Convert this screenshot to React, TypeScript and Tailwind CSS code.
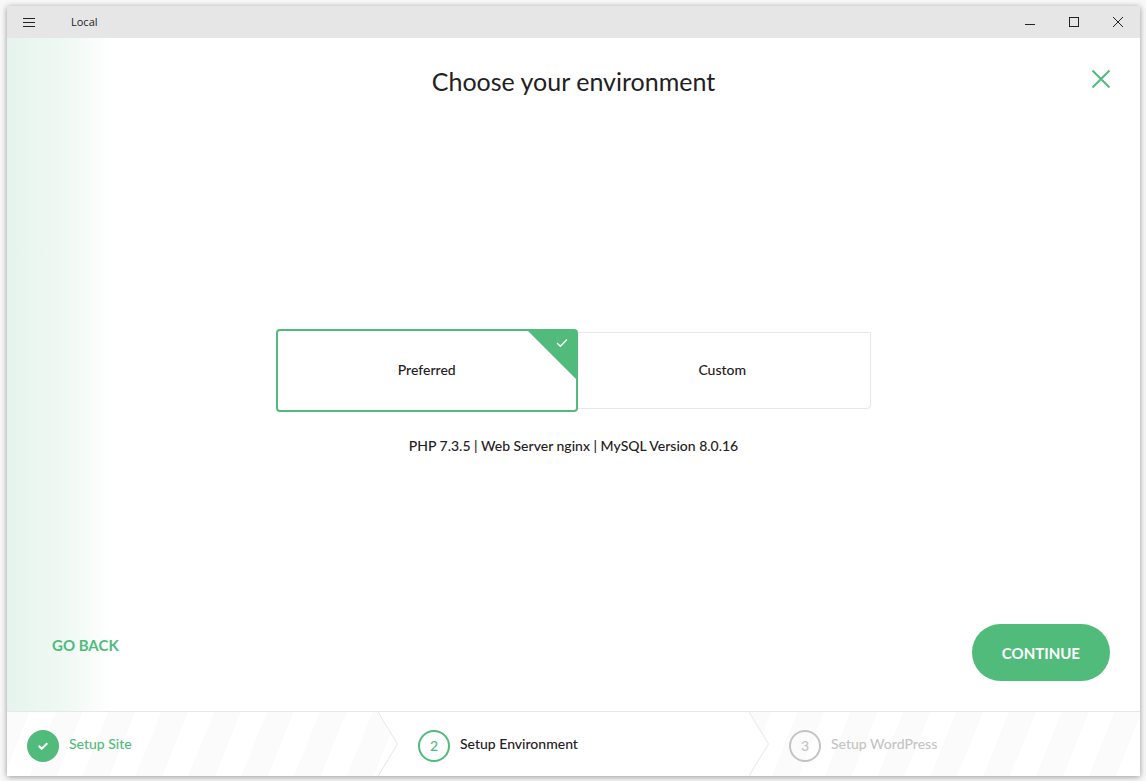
import React, { useState } from "react";
import clsx from "clsx";

const stripes =
  "bg-[repeating-linear-gradient(112deg,#fbfbfb_0px,#fbfbfb_21px,#fff_21px,#fff_45px,#fbfbfb_45px,#fbfbfb_49px)]";

const TitleBar: React.FC = () => (
  <header className="flex h-8 items-stretch bg-[#e6e6e6] text-[#222]">
    <button type="button" aria-label="Menu" className="flex w-11 items-center justify-center">
      <svg width="12" height="9" viewBox="0 0 12 9" fill="currentColor" shapeRendering="crispEdges">
        <path d="M0 0h12v1H0zM0 4h12v1H0zM0 8h12v1H0z" />
      </svg>
    </button>
    <span className="flex-1 self-center pl-5 font-['Open_Sans',sans-serif] text-[11px] leading-4">Local</span>
    <button type="button" aria-label="Minimize" className="flex w-11 items-center justify-center">
      <svg width="10" height="10" viewBox="0 0 10 10" fill="currentColor" shapeRendering="crispEdges">
        <path d="M0 7h10v1H0z" />
      </svg>
    </button>
    <button type="button" aria-label="Maximize" className="flex w-11 items-center justify-center">
      <svg width="10" height="10" viewBox="0 0 10 10" fill="none" stroke="currentColor">
        <rect x="0.5" y="0.5" width="9" height="9" />
      </svg>
    </button>
    <button type="button" aria-label="Close window" className="flex w-11 items-center justify-center">
      <svg width="10" height="10" viewBox="0 0 10 10" fill="none" stroke="currentColor">
        <path d="M0 0l10 10M10 0L0 10" />
      </svg>
    </button>
  </header>
);

type OptionProps = {
  label: string;
  checked: boolean;
  onSelect: () => void;
  className?: string;
};

const Option: React.FC<OptionProps> = ({ label, checked, onSelect, className }) => (
  <label
    className={clsx(
      "relative flex cursor-pointer items-center justify-center bg-white text-sm leading-5",
      checked ? "z-10 h-[83px] rounded border-2 border-[#51bb7b]" : "h-[77px] rounded-b border border-[#e7e7e7]",
      className
    )}
  >
    <input type="radio" name="environment" checked={checked} onChange={onSelect} className="sr-only" />
    {label}
    {checked && (
      <svg className="absolute -top-px -right-px" width="50" height="50" viewBox="0 0 50 50" fill="none">
        <path d="M0 0h48a2 2 0 0 1 2 2v48z" fill="#51bb7b" />
        <path d="M30 13l3.300 3.300L40 9.500" stroke="#fff" strokeWidth="1.4" />
      </svg>
    )}
  </label>
);

type StepProps = {
  number: number;
  label: string;
  state: "done" | "active" | "todo";
};

const Step: React.FC<StepProps> = ({ number, label, state }) => {
  const last = state === "todo";
  return (
    <li
      className={clsx(
        "relative flex items-start gap-2.5 pt-[18px]",
        state === "done" && "z-20 pl-5 text-[#51bb7b]",
        state === "active" && "z-10 pl-10",
        last && "pl-10 text-[#c4c4c4]"
      )}
    >
      <div
        className={clsx(
          "absolute inset-y-0 -right-5 left-0 -z-10",
          !last && "[clip-path:polygon(0_0,calc(100%_-_20px)_0,100%_50%,calc(100%_-_20px)_100%,0_100%)]",
          state === "active" ? "bg-white" : stripes
        )}
      />
      {!last && (
        <svg className="absolute inset-y-0 left-full h-full w-5" viewBox="0 0 20 64" preserveAspectRatio="none" fill="none">
          <path d="M0 0l19.500 32L0 64" stroke="#e7e7e7" />
        </svg>
      )}
      <span
        className={clsx(
          "flex size-8 shrink-0 items-center justify-center rounded-full text-sm",
          state === "done" && "bg-[#51bb7b] text-white",
          state === "active" && "border-2 border-[#51bb7b] text-[#51bb7b]",
          last && "border-2 border-[#c4c4c4]"
        )}
      >
        {state === "done" ? (
          <svg width="10" height="8" viewBox="0 0 10 8" fill="none" stroke="currentColor" strokeWidth="2">
            <path d="M0.700 3.800l3 3L9.300 1.200" />
          </svg>
        ) : (
          number
        )}
      </span>
      <span className="text-sm leading-7">{label}</span>
    </li>
  );
};

export default function App() {
  const [environment, setEnvironment] = useState("preferred");

  return (
    <div className="flex min-h-screen bg-[#f8f8f8] pt-1.5 pr-1.5 pb-[5px] pl-[7px] font-[Lato,sans-serif] font-medium text-[#1f2123]">
      <div className="flex flex-1 flex-col bg-white shadow-[0_1px_6px_rgba(0,0,0,0.4)]">
        <TitleBar />
        <main className="flex flex-1 flex-col bg-[linear-gradient(90deg,#e5f4ec,#f0f9f4_60px,#fff_105px)]">
          <div className="grid grid-cols-[1fr_auto_1fr] items-start px-[30px] pt-7 pb-16">
            <h1 className="col-start-2 text-[25px] leading-[30px] font-normal">Choose your environment</h1>
            <button type="button" aria-label="Close" className="mt-1 justify-self-end text-[#51bb7b]">
              <svg className="block" width="18" height="18" viewBox="0 0 18 18" fill="none" stroke="currentColor" strokeWidth="2">
                <path d="M0.500 0.500l17 17M17.500 0.500l-17 17" />
              </svg>
            </button>
          </div>

          <div className="flex flex-1 flex-col items-center justify-center">
            <div role="radiogroup" aria-label="Environment" className="grid w-full max-w-[595px] grid-cols-2 items-center">
              <Option
                label="Preferred"
                checked={environment === "preferred"}
                onSelect={() => setEnvironment("preferred")}
                className="-mr-1"
              />
              <Option
                label="Custom"
                checked={environment === "custom"}
                onSelect={() => setEnvironment("custom")}
              />
            </div>
            <p className="mt-6 text-sm leading-5">PHP 7.3.5 | Web Server nginx | MySQL Version 8.0.16</p>
          </div>

          <div className="flex items-start justify-between pr-[30px] pb-[30px] pl-[45px]">
            <a href="#" className="py-3 text-[15px] leading-[18px] font-bold text-[#51bb7b]">
              GO BACK
            </a>
            <button type="button" className="h-[57px] rounded-full bg-[#51bb7b] px-[30px] text-[15px] leading-5 font-bold text-white">
              CONTINUE
            </button>
          </div>
        </main>
        <footer className="border-t border-[#e7e7e7]">
          <ol className="isolate grid h-16 grid-cols-3 pr-5">
            <Step number={1} label="Setup Site" state="done" />
            <Step number={2} label="Setup Environment" state="active" />
            <Step number={3} label="Setup WordPress" state="todo" />
          </ol>
        </footer>
      </div>
    </div>
  );
}
